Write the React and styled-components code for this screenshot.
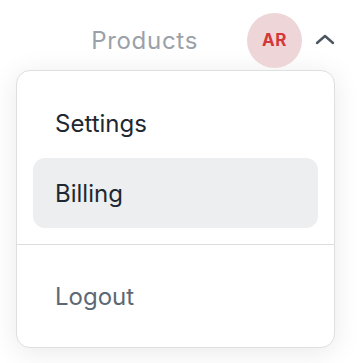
import React from "react";
import styled, { createGlobalStyle } from "styled-components";

const GlobalStyle = createGlobalStyle`
  body {
    margin: 0;
    background: #ffffff;
    font-family: Inter, "Noto Sans", sans-serif;
  }
`;

const Page = styled.div`
  width: 361px;
  height: 363px;
  padding: 12px 0 0 16px;
  box-sizing: border-box;
`;

const Header = styled.div`
  display: flex;
  align-items: center;
  justify-content: flex-end;
  width: 319px;
  height: 56px;
`;

const NavLink = styled.span`
  font-size: 24px;
  color: #9aa1a8;
  margin-right: 49px;
  letter-spacing: 0.7px;
`;

const Avatar = styled.div`
  width: 55px;
  height: 55px;
  border-radius: 50%;
  background: #eed5d7;
  color: #d4373a;
  font-weight: 700;
  font-size: 17px;
  letter-spacing: 0.6px;
  display: flex;
  align-items: center;
  justify-content: center;
`;

const Toggle = styled.span`
  display: flex;
  margin-left: 11px;
  margin-right: -2px;
  color: #4b5560;
`;

const Menu = styled.div`
  margin-top: 2px;
  width: 319px;
  box-sizing: border-box;
  border: 1px solid #dedfe0;
  border-radius: 14px;
  background: #ffffff;
  box-shadow: 0 4px 28px rgba(0, 0, 0, 0.09);
  overflow: hidden;
`;

const Section = styled.div`
  padding: ${(p) => (p.$first ? "17px 16px 16px" : "16px 16px")};
`;

const Item = styled.div`
  height: 70px;
  display: flex;
  align-items: center;
  padding-left: 22px;
  border-radius: 12px;
  font-size: 24px;
  color: ${(p) => (p.$muted ? "#5c6873" : "#1d2832")};
  background: ${(p) => (p.$active ? "#edeef0" : "transparent")};
`;

const Divider = styled.div`
  height: 1px;
  background: #dcdddf;
`;

export default function App() {
  return (
    <Page>
      <GlobalStyle />
      <Header>
        <NavLink>Products</NavLink>
        <Avatar>AR</Avatar>
        <Toggle>
          <svg width="24" height="24" viewBox="0 0 24 24" fill="none" stroke="currentColor" strokeWidth="2.4" strokeLinecap="round" strokeLinejoin="round">
            <path d="M4 15l8-7 8 7" />
          </svg>
        </Toggle>
      </Header>
      <Menu>
        <Section $first>
          <Item>Settings</Item>
          <Item $active>Billing</Item>
        </Section>
        <Divider />
        <Section>
          <Item $muted>Logout</Item>
        </Section>
      </Menu>
    </Page>
  );
}
